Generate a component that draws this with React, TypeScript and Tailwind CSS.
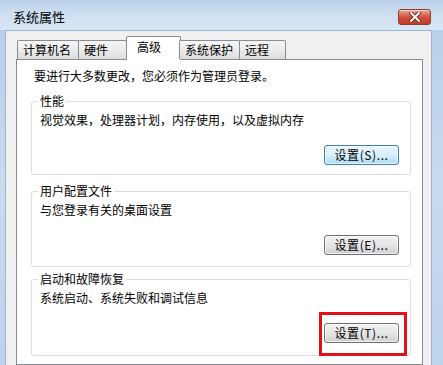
import React from "react";

function Btn({ label, focused }: { label: string; focused?: boolean }) {
  return (
    <button
      className={
        focused
          ? "w-[75px] h-[20px] rounded-[3px] border border-[#3c7fb1] bg-gradient-to-b from-[#eaf6fd] via-[#d9f0fc] to-[#a9dbf6] text-[12px] leading-[18px] tracking-[0.6px] text-black shadow-[inset_0_0_0_1px_rgba(255,255,255,0.7)]"
          : "w-[75px] h-[20px] rounded-[3px] border border-[#707070] bg-gradient-to-b from-[#f2f2f2] via-[#e6e6e6] to-[#cfcfcf] text-[12px] leading-[18px] tracking-[0.6px] text-black shadow-[inset_0_0_0_1px_rgba(255,255,255,0.7)]"
      }
    >
      {label}
    </button>
  );
}

function Group({
  title,
  text,
  btn,
  focused,
  mark,
  className,
}: {
  title: string;
  text: string;
  btn: string;
  focused?: boolean;
  mark?: boolean;
  className?: string;
}) {
  return (
    <div
      className={
        "relative ml-[14px] mr-[11px] rounded-[3px] border border-[#d5dfe5] pt-[10px] pl-[8px] pr-[11px] flex flex-col " +
        (className ?? "")
      }
    >
      <span className="absolute left-[6px] top-[-8px] bg-white px-[2px] leading-[14px]">{title}</span>
      <div className="leading-[16px]">{text}</div>
      <div className="mt-[17px] self-end relative">
        <Btn label={btn} focused={focused} />
        {mark && (
          <div className="absolute left-[-5px] right-[-8px] top-[-11px] bottom-[-13px] border-[3px] border-[#e3101c]" />
        )}
      </div>
    </div>
  );
}

export default function App() {
  const tabs = [
    { t: "计算机名", w: "w-[62px]" },
    { t: "硬件", w: "w-[49px]" },
    { t: "高级", w: "w-[55px]", sel: true },
    { t: "系统保护", w: "w-[61px]" },
    { t: "远程", w: "w-[47px]" },
  ];
  return (
    <div className="w-[443px] h-[365px] overflow-hidden flex flex-col bg-gradient-to-b from-[#b4cde8] via-[#c8dbef] to-[#bdd3ec] text-[12px] text-black font-['Noto_Sans_CJK_SC','Noto_Sans',sans-serif]">
      <div className="h-[30px] shrink-0 flex items-start justify-between pl-[13px] pr-[12px] bg-gradient-to-b from-[#b9d1ea] via-[#cfe0f2] to-[#d8e6f5]">
        <span className="mt-[9px] leading-[16px] text-[13px]">系统属性</span>
        <div className="mt-[9px] w-[33px] h-[16px] rounded-[3px] border border-[#8e3a2e] bg-gradient-to-b from-[#e8a89c] via-[#d0513f] to-[#c23a26] flex items-center justify-center shadow-[inset_0_1px_0_rgba(255,255,255,0.5)]">
          <svg width="12" height="10" viewBox="0 0 12 10">
            <path d="M2 1 L10 9 M10 1 L2 9" stroke="#5a1b12" strokeWidth="3.6" strokeLinecap="square" />
            <path d="M2 1 L10 9 M10 1 L2 9" stroke="#ffffff" strokeWidth="2" strokeLinecap="square" />
          </svg>
        </div>
      </div>
      <div className="flex-1 ml-[5px] mr-[11px] bg-[#f0f0f0] border-l border-r border-t border-[#9fb5cf] pt-[5px] pl-[10px] pr-[8px] flex flex-col">
        <div className="h-[23px] flex items-end pl-[1px] relative z-10">
          {tabs.map((tb) =>
            tb.sel ? (
              <div
                key={tb.t}
                className={`${tb.w} h-[24px] -mb-[1px] -ml-[1px] -mr-[1px] border border-b-0 border-[#898c95] bg-white rounded-t-[2px] pl-[10px] pt-[2px] leading-[16px]`}
              >
                {tb.t}
              </div>
            ) : (
              <div
                key={tb.t}
                className={`${tb.w} h-[19px] border border-b-0 border-[#898c95] bg-gradient-to-b from-[#f6f6f6] via-[#ebebeb] to-[#dcdcdc] rounded-t-[2px] px-[5px] leading-[17px] -ml-[1px] first:ml-0`}
              >
                {tb.t}
              </div>
            )
          )}
        </div>
        <div className="flex-1 border border-[#898c95] bg-white pt-[8px]">
          <div className="pl-[17px] leading-[16px]">要进行大多数更改，您必须作为管理员登录。</div>
          <Group
            className="mt-[17px] h-[74px]"
            title="性能"
            text="视觉效果，处理器计划，内存使用，以及虚拟内存"
            btn="设置(S)..."
            focused
          />
          <Group className="mt-[16px] h-[76px]" title="用户配置文件" text="与您登录有关的桌面设置" btn="设置(E)..." />
          <Group className="mt-[12px] h-[77px]" title="启动和故障恢复" text="系统启动、系统失败和调试信息" btn="设置(T)..." mark />
        </div>
      </div>
    </div>
  );
}
